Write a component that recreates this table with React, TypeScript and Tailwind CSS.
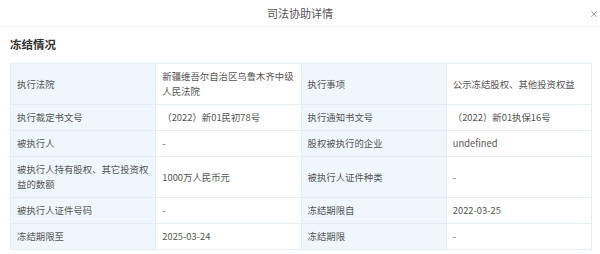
import { Fragment } from 'react';
import { X } from 'lucide-react';

interface Cell {
  label: string;
  value: string;
}

const rows: [Cell, Cell][] = [
  [
    { label: '执行法院', value: '新疆维吾尔自治区乌鲁木齐中级人民法院' },
    { label: '执行事项', value: '公示冻结股权、其他投资权益' },
  ],
  [
    { label: '执行裁定书文号', value: '（2022）新01民初78号' },
    { label: '执行通知书文号', value: '（2022）新01执保16号' },
  ],
  [
    { label: '被执行人', value: '-' },
    { label: '股权被执行的企业', value: 'undefined' },
  ],
  [
    { label: '被执行人持有股权、其它投资权益的数额', value: '1000万人民币元' },
    { label: '被执行人证件种类', value: '-' },
  ],
  [
    { label: '被执行人证件号码', value: '-' },
    { label: '冻结期限自', value: '2022-03-25' },
  ],
  [
    { label: '冻结期限至', value: '2025-03-24' },
    { label: '冻结期限', value: '-' },
  ],
];

export default function App() {
  return (
    <div
      className="w-[600px] h-[254px] overflow-hidden bg-white text-[#333]"
      style={{ fontFamily: '"Noto Sans CJK SC", "Noto Sans", sans-serif' }}
    >
      <div className="relative h-[27px] flex items-center justify-center border-b border-[#eeeeee]">
        <span className="text-[11px] text-[#555]">司法协助详情</span>
        <X className="absolute right-[1px] top-[9px] w-[10px] h-[10px] text-[#666]" strokeWidth={1.5} />
      </div>
      <div className="h-[36px] flex items-center pl-[10px]">
        <h2 className="text-[11.5px] font-bold text-[#333]">冻结情况</h2>
      </div>
      <table className="ml-[10px] w-[582px] table-fixed border-collapse text-[9.4px] leading-[15px]">
        <tbody>
          {rows.map((row, i) => (
            <tr key={i}>
              {row.map((cell, j) => (
                <Fragment key={j}>
                  <td className="border border-[#e5ecf4] bg-[#eff6fd] px-[6px] py-[5px] align-middle text-[#555]">
                    {cell.label}
                  </td>
                  <td className="border border-[#e5ecf4] bg-white px-[6px] py-[5px] align-middle text-[#555]">
                    {cell.value}
                  </td>
                </Fragment>
              ))}
            </tr>
          ))}
        </tbody>
      </table>
    </div>
  );
}
